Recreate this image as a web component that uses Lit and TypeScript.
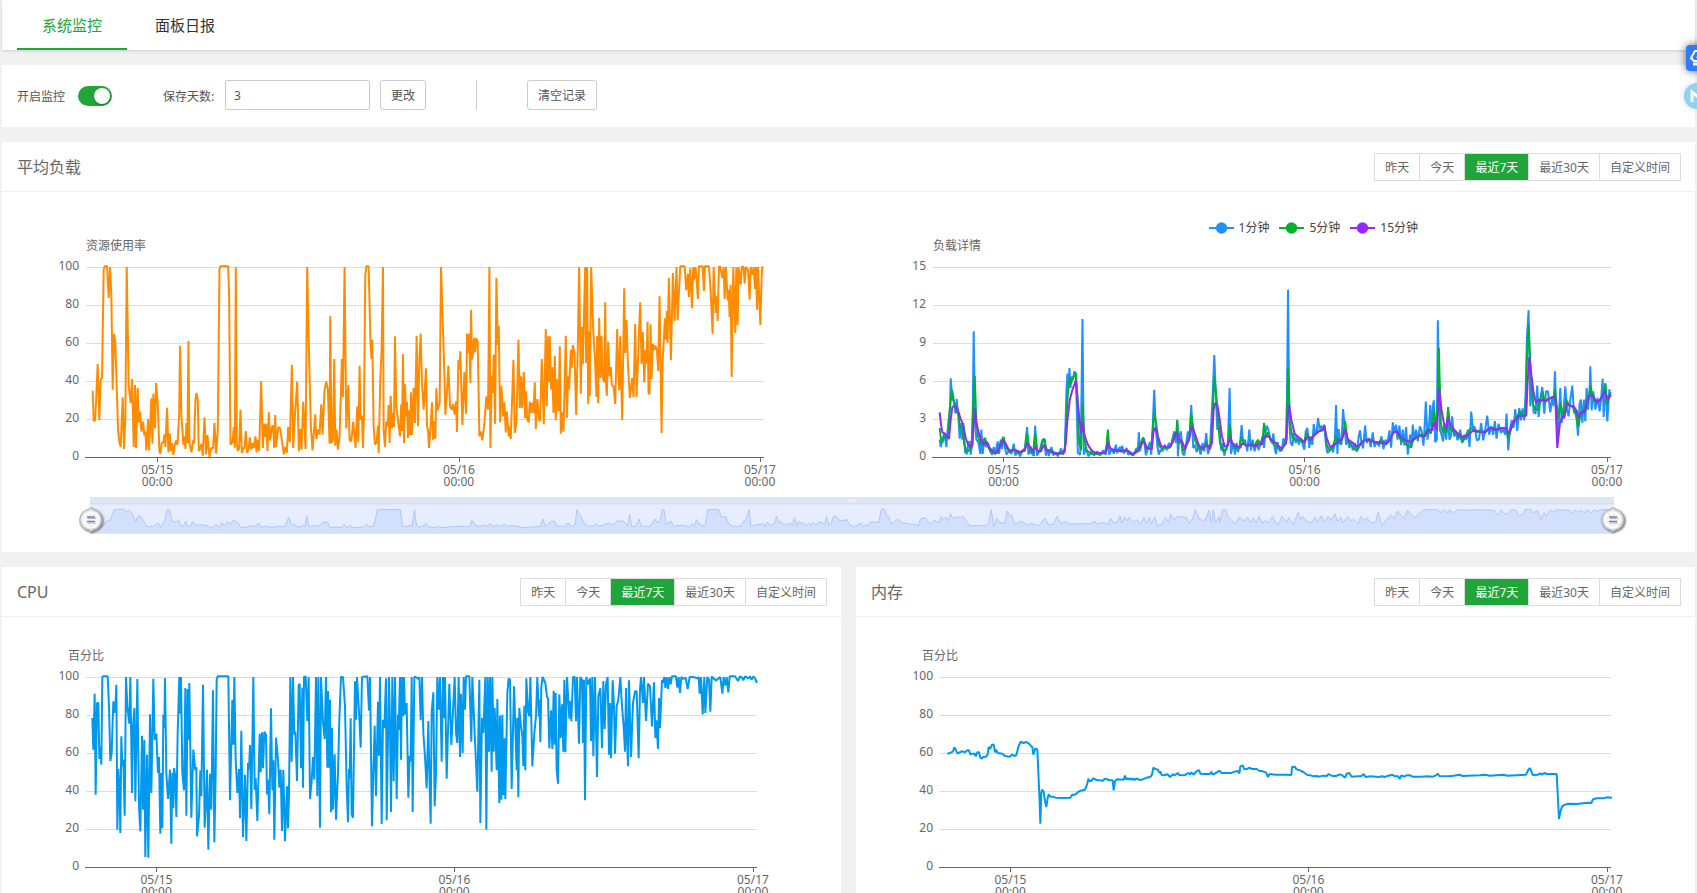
import { LitElement, html, svg, css } from "lit";
import { customElement, property, state } from "lit/decorators.js";

type Segment = [number, number, string];
interface Series {
  name: string;
  color: string;
  points: string;
}
interface Tick {
  at: number;
  day: string;
}

/**
 * Joins recorded segments into one polyline; each segment carries its own origin.
 * Samples that a previous segment already covered are dropped.
 */
function trace(...segments: Segment[]): string {
  const out: string[] = [];
  let last = -Infinity;
  for (const [dx, dy, data] of segments) {
    const n = data.trim().split(/\s+/).map(Number);
    for (let i = 0; i + 1 < n.length; i += 2) {
      const x = n[i] + dx;
      if (x < last) continue;
      last = x;
      out.push(`${x},${n[i + 1] + dy}`);
    }
  }
  return out.join(" ");
}

const usage = trace(
  [-110, -112, `130 483 133 573 137 573 140 520 145 403 150 572 154 450 158 445 163 120 166 110 173 110 178 205 182 112 186 200 190 480 194 312 198 340 206 600 210 636 214 652 220 503 224 658 228 560 232 112 238 470 244 520 248 448 253 652 257 466 260 656 265 474 268 578 272 546 276 606 281 576 285 618 288 606 291 662 296 568 299 662 306 506 309 642 312 492 317 596 320 460 325 520 330 665 333 672 337 640 342 638 345 614 348 652 353 534 357 668 361 612 364 664 368 640 372 676 376 645 381 632 384 646 389 560 392 348 396 560 402 645 405 620 408 658 411 580 414 640 417 334 420 640 426 668 431 632 434 642 438 510 441 490 445 510 448 664 453 655 456 642 460 678 465 564 470 674 474 616 480 682 485 655 491 656 495 580 500 672 505 600 510 120 512 110 536 110 539 200 543 645 549 638 553 592 556 654 559 112 562 640 565 664 569 655 573 540 577 670 581 655 585 655 589 604 593 670 598 655 601 623 605 660 609 640 613 655 618 620 621 668 625 630 629 665 635 454 640 655 643 582 646 622 650 582 654 664 658 548 662 632 668 588 671 590 674 655 677 556 680 652 686 592 692 597 698 640 703 674 707 652 712 670 716 592 721 638 727 405 731 655 736 560 743 456 748 665 752 598 756 660 761 516 768 658 773 112 779 400 784 590 789 662 797 554 800 628 805 600 810 614 815 524 819 615 825 480 830 455 835 480 840 642 842 260 846 640 850 630 854 388 857 648 861 600 865 660 870 620 877 388 880 502 885 112 890 596 896 466 900 632 905 635 911 576 918 655 923 530 926 638 930 408 933 570 937 558 940 656 943 560 947 140 950 110 957 110 963 350 966 388 968 330 972 590 976 644 981 640 985 588 987 670 992 450 996 360 1000 112 1002 600 1006 652 1010 575 1014 590 1017 526 1020 640 1023 498 1027 596 1030 550 1033 592 1036 320 1040 530 1045 570 1051 620 1055 524 1057 604 1060 374 1063 640 1066 464 1069 560 1072 516 1075 625 1079 542 1082 616 1084 488 1087 616 1092 474 1096 580 1101 318`],
  [970, -112, `25 590 29 400 33 312 37 460 42 540 49 416 52 590 55 600 58 655 62 600 67 518 70 630 74 575 77 628 80 476 84 542 90 520 92 300 94 112 100 300 104 430 107 555 111 500 116 408 121 530 126 540 130 523 135 555 139 515 142 607 146 392 149 420 152 365 158 586 164 427 169 552 172 312 175 370 178 312 182 460 184 240 187 390 190 370 193 324 196 368 200 326 204 335 209 620 213 605 218 632 224 580 230 500 235 540 239 112 242 655 246 438 249 490 252 375 256 582 260 145 264 345 267 288 271 578 275 470 280 560 284 518 288 608 291 545 297 620 300 590 303 628 311 390 315 610 320 580 326 330 330 535 334 440 337 535 342 427 346 565 349 485 352 568 357 578 360 516 363 550 367 520 371 550 375 458 378 598 383 508 388 570 391 575 396 388 402 584 408 298 411 530 415 320 418 458 420 320 424 480 427 412 431 550 435 378 438 572 441 448 446 545 450 350 453 612 457 548 461 606 468 318 471 565 475 440 478 480 483 360 486 414 489 346 494 370 499 556 504 350 508 112 513 492 516 292 519 404 526 112 529 400 532 112 535 522 537 305 540 500 544 112 550 300 555 380 560 502 562 318 565 520 568 264 571 445 575 318 578 440 583 458 586 218 589 470 591 498 595 336 599 440 603 412 606 466 611 470 616 523 622 298 625 420 628 482 631 320 637 572 643 176 646 370 650 270 654 400 660 505 667 445 671 503 676 282 680 502 685 378 688 290 691 218 695 402 699 308 703 458 707 360 710 402 713 276 716 490 719 494 722 284 725 448 729 342 733 360 737 348 741 362 745 424 749 200 755 610 758 400 765 266 768 330 771 244 773 340 777 144 783 392 789 130 794 274 800 112 803 272 811 110 824 110 829 182 834 132 837 202 841 115 846 236 850 112 852 150 857 112 864 208 867 110 878 110 882 184 885 110 897 110 902 184 908 312 911 112 914 180 917 250 921 200 923 274 927 110 931 112 937 145 941 112 944 208 948 112 953 212 956 180 959 262 962 165 965 442 970 112 976 310 979 112 983 286 986 112 992 165 996 110 1001 112 1004 162 1008 112 1014 120 1019 210 1022 112 1027 135 1031 112 1035 178 1038 112 1041 240 1044 112 1047 190 1051 286 1055 140 1057 112 1060 112`]
);

const load1 = trace(
  [-70, -172, `90 690 93 712 98 690 104 670 110 712 114 660 118 620 121 600 123 506 128 570 133 575 138 612 141 568 146 620 150 687 154 640 158 690 161 640 166 727 172 733 176 700 180 694 183 735 188 700 192 365 196 640 200 690 206 698 212 733 215 660 219 733 224 685 229 712 235 700 241 725 247 735 252 712 256 735 264 695 268 733 273 690 277 718 281 682 286 715 290 735 298 722 305 733 312 702 317 738 324 722 331 740 338 722 345 720 352 652 356 735 363 712 368 735 373 738 376 648 382 738 390 722 398 690 404 688 408 738 413 718 417 739 425 712 430 737 438 728 444 740 454 716 458 735 465 725 470 540 473 492 476 535 479 475 482 535 486 500 489 510 494 485 498 492 501 600 504 730 511 735 514 640 518 328 522 735 528 715 536 740 545 725 553 737 562 725 570 737 580 722 588 735 594 680 598 735 606 718 612 732 618 705 622 730 630 712 633 728 637 708 642 732 650 715 655 735 664 728 670 738 680 715 684 725 687 668 690 725 696 700 702 685 708 737 714 715 720 697 724 735 729 640 733 540 738 660 743 715 747 735 752 720 758 725 765 705 770 722 777 700 782 712 787 690 793 665 798 700 802 630 804 740 808 680 813 665 818 732 823 737 829 700 834 665 839 680 844 586 850 715 855 705 860 727 867 710 872 735 878 700 883 725 889 670 894 733 900 715 905 620 908 560 913 436 918 560 922 660 928 650 934 722 939 700 943 738 950 712 954 700 959 535 963 733 970 700 975 735 980 700 984 727 990 705 995 646 999 700 1005 690 1012 725 1018 660 1023 722 1028 690 1034 725 1040 695 1046 722 1052 700 1058 680 1062 715 1067 665 1070 648 1075 660 1081 690 1086 700 1090 671 1094 715 1098 733 1103 697`],
  [1010, -172, `24 710 30 725 36 720 40 686 44 705 48 680 51 560 54 240 58 640 62 700 67 708 72 670 77 700 82 680 86 705 92 685 98 705 103 720 107 665 112 655 118 715 122 680 127 706 131 643 135 670 140 665 144 625 149 660 154 648 158 660 163 645 167 700 172 730 178 725 183 712 189 728 194 700 198 586 202 733 206 658 210 700 214 705 219 598 223 640 228 705 234 690 238 715 243 695 248 722 254 700 260 726 266 680 270 662 274 700 279 716 285 648 290 700 296 685 302 712 308 668 313 712 320 695 327 710 334 680 340 718 346 690 352 700 358 662 363 714 368 638 373 668 378 645 382 690 388 648 393 706 398 660 403 708 408 652 413 735 420 675 424 715 428 645 433 690 438 660 443 695 449 650 454 662 460 708 464 640 467 576 472 690 476 660 480 586 484 660 488 590 491 572 495 698 500 690 503 332 509 660 514 675 519 695 523 640 528 690 533 625 538 690 542 680 546 620 551 680 557 670 562 692 570 660 576 700 582 675 588 690 593 660 598 712 603 606 608 655 613 650 620 692 626 690 633 640 639 692 645 660 651 618 657 675 663 650 669 675 674 634 679 687 685 642 692 670 698 660 705 675 709 612 714 722 719 660 725 632 730 655 735 598 741 664 747 595 752 632 757 596 762 632 766 560 770 385 775 302 780 590 785 515 790 608 796 612 801 528 805 622 810 570 816 532 822 612 827 545 833 545 840 608 846 560 850 590 854 485 858 610 863 690 870 535 874 640 880 600 885 530 890 600 895 620 900 570 906 528 911 610 917 600 923 678 928 580 932 570 936 640 941 570 945 635 949 535 953 600 958 540 960 470 964 602 969 545 975 600 982 565 988 605 993 560 997 507 1000 622 1005 520 1011 635 1017 540 1020 545`]
);

const load5 = trace(
  [-70, -172, `90 655 94 690 98 700 104 675 110 685 116 672 120 600 124 565 127 540 133 575 138 605 146 610 150 650 158 655 163 700 170 722 175 725 181 718 186 700 190 600 195 498 200 640 205 680 212 705 220 695 226 685 232 705 240 720 250 730 260 728 268 712 275 695 281 682 288 710 300 728 312 718 325 732 338 725 346 715 352 670 357 705 363 730 370 730 376 670 382 720 390 728 397 700 404 688 410 720 425 722 438 732 455 728 465 722 470 620 475 540 480 505 484 520 490 505 494 498 498 490 503 560 508 700 514 722 518 580 523 680 530 722 545 733 570 733 585 730 590 710 594 660 598 712 610 725 630 722 650 722 665 735 680 725 690 705 700 683 708 715 716 718 724 712 729 660 733 605 740 650 748 710 758 718 768 712 778 715 786 700 794 670 800 672 802 632 806 700 813 695 820 725 830 705 838 690 844 612 849 650 855 690 865 715 875 720 884 712 889 695 895 715 903 700 908 620 913 500 920 570 925 640 930 700 940 725 950 718 956 690 960 645 965 700 975 715 988 712 995 682 1002 702 1012 710 1024 700 1034 708 1044 690 1052 706 1058 690 1062 640 1068 680 1074 668 1082 690 1092 705 1100 712`],
  [1010, -172, `25 715 35 722 42 705 50 690 54 472 60 640 68 685 78 692 90 690 100 700 111 670 120 692 132 675 145 665 158 660 163 648 170 705 178 722 188 712 198 680 205 700 212 700 219 680 225 634 232 690 242 705 252 718 262 722 272 700 285 690 300 690 320 702 335 690 348 705 360 690 370 668 380 668 392 690 405 700 415 710 422 712 432 685 448 678 455 672 460 685 470 660 482 672 492 602 498 660 502 600 506 415 512 640 518 670 523 650 528 670 534 592 540 660 550 665 562 675 578 696 590 672 603 655 618 668 632 665 645 670 655 655 668 655 680 662 695 655 708 655 714 686 722 660 732 632 741 620 750 605 758 620 765 615 770 450 775 345 782 500 787 580 795 600 803 600 810 568 817 545 823 578 832 568 842 565 850 565 854 540 860 590 864 630 870 580 880 620 888 570 895 585 908 592 918 620 924 652 932 605 942 600 950 570 957 555 960 528 966 555 974 575 983 578 992 565 1000 550 1005 523 1010 585 1016 560 1022 548`]
);

const load15 = trace(
  [-70, -172, `90 608 94 645 98 668 106 672 118 688 123 630 128 592 136 588 144 600 152 625 160 645 168 685 175 705 183 714 188 705 195 596 200 640 207 668 214 690 222 705 230 695 240 715 250 725 262 730 270 712 280 692 287 700 296 718 305 725 315 720 330 727 345 723 352 700 360 710 370 725 376 712 384 725 394 725 402 705 410 722 425 727 440 733 462 730 468 700 473 630 480 570 488 540 498 512 502 560 508 620 514 672 518 638 525 680 534 705 545 722 558 730 585 730 590 722 594 698 602 716 615 722 640 725 655 723 668 735 684 725 694 705 702 694 712 715 726 718 731 665 736 655 744 680 754 710 768 712 780 712 790 695 797 672 801 668 806 690 814 690 826 718 836 690 842 668 847 650 854 670 866 705 876 716 890 707 900 717 906 700 911 600 916 580 922 585 928 620 936 680 944 710 952 710 960 684 968 702 982 712 991 714 996 702 1010 707 1024 707 1038 710 1045 702 1055 705 1063 680 1070 682 1075 678 1085 692 1100 702`],
  [1010, -172, `22 706 35 716 48 702 53 620 57 585 64 630 74 672 88 685 103 698 113 682 124 688 135 675 147 665 158 662 163 650 170 685 180 712 195 705 206 690 212 695 220 675 226 660 234 690 246 698 260 711 270 705 285 690 302 692 320 698 348 702 358 692 370 668 380 665 390 680 402 690 412 695 422 695 438 685 450 678 464 680 475 660 486 662 492 636 500 662 507 538 514 600 522 645 528 655 534 622 541 648 552 660 566 675 580 683 592 678 606 665 618 662 634 668 648 665 660 655 676 660 692 656 708 658 715 672 728 640 738 630 748 618 768 618 772 520 777 442 784 500 790 550 797 580 806 570 812 575 818 568 826 575 836 568 846 562 855 562 861 715 869 640 876 620 882 625 890 582 898 588 910 590 920 605 924 625 932 610 944 605 952 572 960 555 970 562 980 578 992 570 1002 545 1008 555 1012 572 1022 555`]
);

const cpu = trace(
  [-258, -352, `277 475 280 570 284 402 287 705 291 430 295 430 298 598 301 560 304 615 307 352 309 350 323 350 327 440 331 604 335 580 340 425 343 460 347 425 349 375 352 810 355 628 358 680 361 820 364 530 367 620 370 600 374 768 378 352 382 440 388 492 391 352 396 700 399 500 403 445 406 725 412 358 417 740 421 815 426 528 429 750 433 540 436 892 441 585 445 894 450 464 454 700 460 357 464 540 469 522 474 640 477 592 481 822 484 640 487 806 490 465 493 505 495 355 499 640 504 718 510 630 514 852 517 640 520 745 522 625 526 650 529 772 533 520 538 352 540 462 543 352 547 640 552 692 556 385 559 768 563 388 566 540 568 370 574 774 580 570 586 632 589 622 591 830 597 770 601 632 604 710 609 375 614 804 617 740 621 630 625 870 630 642 634 750 639 392 643 848 647 640 650 360 653 350 685 350 690 722 697 420 700 555 703 352 707 600 712 700 717 628 720 776 724 513 729 832 735 645 739 844 744 610 747 630 750 556 754 748 760 352 764 690 767 655 772 784 779 522 782 638 786 518 789 626 793 516 798 525 801 704 804 660 808 764 813 446 817 692 820 602 823 840 828 534 834 600 838 684 842 630 846 814 850 630 855 845 861 680 864 806 867 700 871 352 875 606 879 352 883 525 886 516 891 664 896 378 899 372 903 626 907 384 909 684 912 352 917 350 922 485 926 352 930 718 935 665 939 592 943 660 948 352 952 710 955 352 960 804 963 352 969 490 974 538 978 352 982 624 984 394 987 624 990 420 993 758 996 505 999 750 1004 584 1008 780 1014 640 1018 480 1023 352 1029 352 1035 440 1040 680 1044 788 1047 628 1049 655 1052 476 1055 765 1059 774 1065 365 1068 480 1071 352 1078 475 1082 564 1086 352 1102 350 1107 452 1110 352 1116 800 1120 640 1124 498 1128 710 1134 426 1137 588 1140 352 1145 793 1149 480 1153 505 1158 356 1160 782 1167 352 1170 505 1173 757 1177 352 1181 665 1185 352 1190 718 1194 465 1196 510 1200 352 1203 600 1206 352 1209 470 1212 352 1215 465 1220 430 1225 714 1229 588`],
  [972, -352, `2 605 5 352 8 757 13 352 17 352 25 358 28 352 32 482 36 352 40 520 45 590 50 686 55 484 58 640 62 792 65 456 70 398 74 740 78 640 82 352 86 450 90 352 95 606 99 352 102 475 105 352 110 657 118 372 124 556 134 352 138 520 142 550 146 352 150 592 153 402 158 580 161 352 165 450 168 350 178 350 184 546 187 352 193 500 202 696 208 360 211 790 216 474 220 520 226 352 229 810 233 352 237 576 240 352 245 636 247 352 251 576 254 445 260 632 262 418 268 730 270 468 274 720 277 465 280 706 283 536 286 718 292 400 296 356 300 360 305 688 312 380 316 500 320 632 322 474 325 713 328 445 333 500 337 530 340 620 343 438 346 632 349 356 354 455 358 470 361 352 367 620 373 520 378 470 382 352 387 470 388 420 391 548 394 380 398 352 406 370 411 412 414 415 418 566 423 452 427 568 431 393 434 555 437 400 440 630 444 672 448 404 452 535 456 434 460 576 463 360 466 578 471 352 478 476 480 424 484 485 489 352 494 352 498 485 501 352 507 552 511 352 516 360 519 550 522 360 525 722 529 352 534 374 540 356 543 544 547 352 550 590 555 352 561 652 565 410 571 386 576 566 580 364 584 508 588 374 593 352 597 585 600 430 603 596 608 362 612 440 615 582 620 440 625 420 631 352 636 440 641 500 645 576 648 385 650 500 654 620 657 362 663 592 669 430 675 395 680 395 686 596 690 390 693 352 699 430 702 352 708 484 714 372 720 380 726 500 732 368 736 535 739 482 744 568 747 415 750 505 756 360 759 370 763 352 766 385 770 352 774 388 778 352 782 374 786 350 798 350 802 384 806 352 810 400 814 352 820 358 827 354 833 388 839 352 850 352 862 356 866 352 869 402 873 352 878 464 883 352 886 460 892 352 897 360 901 456 905 350 910 356 918 362 926 356 931 352 937 402 941 352 946 378 950 352 955 398 959 350 975 350 984 364 990 350 996 354 1000 362 1005 350 1015 356 1020 350 1025 360 1030 350 1036 358 1041 370`]
);

const memory = trace(
  [-270, -352, `292 582 300 580 309 575 313 563 318 572 323 582 330 577 338 575 345 578 352 572 357 572 361 584 367 582 374 582 377 590 382 578 387 578 391 594 395 597 400 592 408 591 413 584 416 562 421 568 425 556 431 554 435 578 438 570 443 580 457 582 465 589 479 591 486 585 493 589 499 586 505 562 512 546 520 550 529 547 537 552 543 559 547 562 550 585 556 566 562 570 566 660 569 730 571 792 574 700 576 690 581 696 585 725 589 742 593 715 596 704 602 711 610 711 616 714 640 715 661 714 667 705 675 705 684 697 692 693 705 690 711 675 715 657 718 664 724 664 729 656 740 661 758 663 766 657 776 661 788 662 791 692 795 664 801 659 821 660 825 648 829 660 834 656 840 660 843 656 848 661 851 656 855 661 860 656 866 660 876 660 890 654 902 651 906 645 910 624 916 628 924 630 928 640 931 635 935 646 942 647 953 644 960 652 969 644 974 647 983 640 988 646 1004 647 1014 640 1020 644 1024 638 1031 645 1038 636 1047 631 1051 642 1065 643 1080 643 1084 636 1088 645 1098 640 1108 633 1115 640 1143 640 1153 636 1164 634 1168 642 1171 620 1178 617 1183 629 1191 628 1198 624 1206 628 1220 628 1229 634`],
  [960, -352, `5 634 18 638 24 652 29 643 45 645 80 645 94 646 96 622 104 621 110 629 120 632 130 637 142 646 152 647 160 650 170 649 178 651 188 648 200 649 206 643 216 649 228 649 240 644 248 648 255 654 260 642 268 640 275 651 290 650 304 649 311 643 317 652 332 650 355 652 366 650 374 652 385 648 396 645 405 650 414 650 419 658 424 647 432 651 440 647 450 647 458 651 485 651 500 650 518 651 526 648 533 642 538 649 565 650 580 648 600 645 606 649 660 647 675 645 690 648 730 645 742 648 798 645 804 632 809 625 814 634 818 646 834 645 840 641 846 645 853 640 860 643 890 643 893 700 897 778 901 757 906 741 914 735 926 732 950 733 975 730 988 729 994 730 999 719 1010 716 1030 716 1040 713 1056 714`]
);

/* Overview curve shown inside the zoom bar, measured from the top of its track. */
const overview = trace(
  [-120, -800, `120 880 150 880 160 885 170 872 180 870 193 837 222 837 228 847 236 838 248 852 256 875 265 857 275 862 290 888 312 888 323 877 332 890 344 872 351 838 358 838 366 872 378 875 386 868 392 885 400 888 407 872 413 888 420 888 427 874 440 885 450 883 462 885 470 885 480 892 488 892 497 882 508 892 516 877 523 888 532 874 541 882 549 870 564 878 572 892 590 890 604 886 612 890 626 878 633 890 645 888 668 891 684 888 704 888 716 860 723 882 732 882 740 888 750 890 757 884 764 890 770 858 776 888 795 885 807 888 818 875 832 875 838 892 860 890 873 892 882 882 890 892 900 886 908 892 940 890 950 882 958 890 970 888 982 838 1050 838 1057 888 1075 888 1080 884`],
  [960, -800, `5 890 13 838 19 885 25 890 40 886 48 880 56 890 75 892 82 886 88 892 140 888 178 888 185 870 196 885 205 888 220 884 230 888 240 880 250 888 262 884 272 888 282 880 290 888 310 886 340 892 390 888 398 866 405 888 420 875 432 872 440 888 460 888 474 878 484 888 494 884 500 838 510 855 522 880 535 888 548 888 555 880 565 888 585 882 596 878 606 884 620 872 640 872 652 888 658 852 664 888 675 888 686 866 692 886 705 888 720 888 734 866 740 876 750 872 755 838 761 838 767 882 782 872 790 888 818 884 838 890 845 880 852 888 858 868 866 882 884 888 892 838 925 838 934 862 946 858 955 882 968 888 990 888 1002 870 1008 866 1016 838 1022 888 1045 882 1060 882 1064 888 1070 876 1080 884 1092 880 1098 858 1106 875`],
  [2040, -20, `30 95 45 105 58 98 66 106 72 82 80 108 86 92 93 100 100 98 106 107 115 98 121 107 127 95 135 104 150 94 163 103 168 78 175 103 182 100 188 80 196 77 208 92 230 88 236 103 252 109 262 104 272 98 278 109 286 103 293 107 299 94 325 97 332 58 342 57 350 78 355 78 361 100 370 96 382 86 396 98 416 100`],
  [2460, -860, `0 942 18 942 22 948 30 926 44 922 50 930 58 942 72 930 84 938 92 918 98 928 106 920 112 932 120 910 127 925 140 920 160 920 176 946 225 946 234 940 242 898 250 950 258 924 266 936 282 940 290 902 298 918 303 914 313 942 332 932 350 944 364 938 374 944 388 944 398 928 404 924 412 942 425 944 440 918 450 940 465 934 480 942 498 940 520 940 538 940 552 932 558 942 575 936 592 942 600 924 608 938 620 936 628 916 634 938 642 920 648 932 656 920 665 936 680 928 690 942 700 920 706 940 716 922 722 942 732 920 740 946 754 942 764 920 774 936 780 910 790 928 800 918 828 922 835 940 845 926 854 898 866 928 878 930 884 928 895 900 902 938 908 898 914 938 925 918 928 936 936 898 945 898 950 918 965 932 975 940 985 920 1000 932 1010 920 1022 938 1028 922 1036 938 1045 918 1055 938 1064 930 1072 938`],
  [3540, -860, `5 918 12 932 22 944 34 918 48 936 54 922 68 942 82 906 90 928 95 918 105 930 120 938 134 920 140 936 152 916 160 936 172 918 180 930 192 910 200 934 210 920 216 938 230 918 238 930 250 928 262 940 270 918 278 930 288 922 300 938 314 936 322 906 330 936 335 946 344 930 360 914 370 924 380 902 400 924 410 900 425 918 432 922 445 908 460 898 500 898 510 906 520 898 530 908 536 898 548 908 560 898 600 900 620 898 670 900 680 915 690 898 700 908 710 912 720 898 735 900 745 918 756 910 762 898 780 898 786 908 800 900 810 928 820 906 826 918 838 898 848 906 854 898 895 900 903 910 910 898 920 906 930 898 940 908 948 898 960 908 970 898 980 904 990 898 1000 898 1029 900`]
);

const percentScale = ["100", "80", "60", "40", "20", "0"];
const days = (a: number, b: number, c: number): Tick[] => [
  { at: a, day: "05/15" },
  { at: b, day: "05/16" },
  { at: c, day: "05/17" },
];

const usageSeries: Series[] = [{ name: "资源使用率", color: "#ff8c00", points: usage }];
const loadSeries: Series[] = [
  { name: "1分钟", color: "#1e90ff", points: load1 },
  { name: "5分钟", color: "#00b22d", points: load5 },
  { name: "15分钟", color: "#9328ff", points: load15 },
];
const cpuSeries: Series[] = [{ name: "CPU", color: "#0099ee", points: cpu }];
const memorySeries: Series[] = [{ name: "内存", color: "#0099ee", points: memory }];

@customElement("line-chart")
class LineChart extends LitElement {
  @property() name = "";
  @property({ type: Boolean, attribute: "name-centered" }) nameCentered = false;
  @property({ type: Number }) span = 2032;
  @property({ attribute: false }) scale: string[] = percentScale;
  @property({ attribute: false }) ticks: Tick[] = [];
  @property({ attribute: false }) series: Series[] = [];

  static styles = css`
    :host {
      display: grid;
      grid-template-columns: 40px minmax(0, 1fr);
      grid-template-rows: 16px 191px auto;
      font-size: 12px;
      line-height: 12px;
      color: #666;
    }
    .name {
      grid-column: 2;
      justify-self: start;
      padding-top: 1px;
      line-height: 16px;
      white-space: nowrap;
    }
    .name.centered {
      transform: translateX(-50%);
    }
    .scale {
      grid-column: 1;
      grid-row: 2;
      display: flex;
      flex-direction: column;
      justify-content: space-between;
      height: 202px;
      margin: 7px 7px -7px 0;
      text-align: right;
    }
    .plot {
      grid-column: 2;
      grid-row: 2;
      display: grid;
      margin: 14px 0 -14px;
    }
    .lines,
    .curves {
      grid-area: 1 / 1;
    }
    .lines {
      display: flex;
      flex-direction: column;
      justify-content: space-between;
      height: 191px;
    }
    .line {
      height: 1px;
      background: #dcdcdc;
    }
    .line:last-child {
      margin-left: -1px;
      background: #666;
    }
    .curves {
      width: 100%;
      height: 190px;
      overflow: visible;
    }
    .days {
      grid-column: 2;
      grid-row: 3;
      position: relative;
      height: 30px;
      margin-top: 14px;
    }
    .day {
      position: absolute;
      top: 0;
      padding-top: 6px;
      transform: translateX(-50%);
      text-align: center;
    }
    .day::before {
      content: "";
      position: absolute;
      top: 0;
      left: 50%;
      width: 1px;
      height: 4px;
      background: #666;
    }
    .day span {
      display: block;
    }
  `;

  render() {
    return html`
      <div class="name ${this.nameCentered ? "centered" : ""}">${this.name}</div>
      <div class="scale">${this.scale.map((s) => html`<span>${s}</span>`)}</div>
      <div class="plot">
        <div class="lines">${this.scale.map(() => html`<div class="line"></div>`)}</div>
        <svg class="curves" viewBox="0 0 ${this.span} 570" preserveAspectRatio="none" aria-hidden="true">
          ${this.series.map(
            (s) => svg`<polyline points=${s.points} fill="none" stroke=${s.color} stroke-width="2"
              stroke-linejoin="bevel" vector-effect="non-scaling-stroke"></polyline>`
          )}
        </svg>
      </div>
      <div class="days">
        ${this.ticks.map(
          (t) => html`<div class="day" style="left:${t.at}%"><span>${t.day}</span><span>00:00</span></div>`
        )}
      </div>
    `;
  }
}

@customElement("range-picker")
class RangePicker extends LitElement {
  @state() private active = 2;
  private options = ["昨天", "今天", "最近7天", "最近30天", "自定义时间"];

  static styles = css`
    :host {
      display: flex;
    }
    .option {
      box-sizing: border-box;
      height: 28px;
      margin: 0;
      padding: 2px 10px 0;
      border: 1px solid #dcdcdc;
      border-right-width: 0;
      background: #fff;
      color: #666;
      font: inherit;
      font-size: 12px;
      line-height: 24px;
      white-space: nowrap;
      cursor: pointer;
    }
    .option:last-child {
      border-right-width: 1px;
    }
    .option.active {
      background: #20a53a;
      background-clip: padding-box;
      color: #fff;
    }
  `;

  render() {
    return this.options.map(
      (label, i) => html`<button
        type="button"
        class="option ${i === this.active ? "active" : ""}"
        aria-pressed=${i === this.active}
        @click=${() => (this.active = i)}
      >${label}</button>`
    );
  }
}

@customElement("zoom-bar")
class ZoomBar extends LitElement {
  static styles = css`
    :host {
      display: grid;
      height: 37px;
    }
    .track,
    .handle {
      grid-area: 1 / 1;
    }
    .track {
      width: 100%;
      height: 37px;
      background: #e6edfe;
    }
    .handle {
      appearance: none;
      align-self: center;
      height: 28px;
      margin: 8px -13px 0;
      background: none;
      pointer-events: none;
    }
    .handle::-webkit-slider-thumb {
      appearance: none;
      width: 28px;
      height: 28px;
      border: 0;
      pointer-events: auto;
      background: url("data:image/svg+xml,%3Csvg xmlns='http://www.w3.org/2000/svg' width='28' height='28'%3E%3Cdefs%3E%3ClinearGradient id='g' x2='1' y2='1'%3E%3Cstop stop-color='%23eee'/%3E%3Cstop offset='1' stop-color='%23c4c4c4'/%3E%3C/linearGradient%3E%3Cfilter id='s' x='-.3' y='-.3' width='1.6' height='1.6'%3E%3CfeDropShadow dx='1' dy='1' stdDeviation='1' flood-color='%23444' flood-opacity='.8'/%3E%3C/filter%3E%3C/defs%3E%3Cpath d='M14 1.5l2 1.8a10.7 10.7 0 0 1 0 21.2l-2 1.8-2-1.8a10.7 10.7 0 0 1 0-21.2z' fill='url(%23g)' stroke='%2399a' stroke-width='.8' filter='url(%23s)'/%3E%3Ccircle cx='14' cy='14' r='8' fill='%23f4f4f4' stroke='%23fff' stroke-width='1.5'/%3E%3Cpath d='M10 11h8M10 15.5h8' stroke='%237083ad' stroke-width='1.4'/%3E%3Cpath d='M11 12.5h8M11 17h8' stroke='%23b3b8c6' stroke-width='1.2'/%3E%3C/svg%3E") center / 28px 28px no-repeat;
    }
  `;

  render() {
    return html`
      <svg class="track" viewBox="0 0 4569 111" preserveAspectRatio="none" aria-hidden="true">
        <polygon points="0,102 ${overview} 4569,102" fill="#d3e0fd"></polygon>
        <rect y="99" width="4569" height="9" fill="#d3e0fd"></rect>
        <polyline points=${overview} fill="none" stroke="#afc7f8" stroke-width="1" vector-effect="non-scaling-stroke"></polyline>
        <rect width="4569" height="19" fill="#dde5f1"></rect>
        <rect y="19" width="4569" height="3" fill="#d0dbed"></rect>
        <rect y="108" width="4569" height="3" fill="#dde5f1"></rect>
        <path d="M2276 6v9M2284 6v9M2292 6v9" stroke="#fff" stroke-width="1" vector-effect="non-scaling-stroke"></path>
      </svg>
      <input class="handle" type="range" min="0" max="100" value="0" aria-label="起始时间" />
      <input class="handle" type="range" min="0" max="100" value="100" aria-label="结束时间" />
    `;
  }
}

@customElement("app-root")
class AppRoot extends LitElement {
  @state() private tab = 0;

  static styles = css`
    :host {
      display: block;
      box-sizing: border-box;
      height: 100vh;
      padding: 0 2px;
      overflow: hidden auto;
      scrollbar-width: none;
      background: #f1f1f1;
      color: #555;
      font-family: "Noto Sans", "Noto Sans CJK SC", sans-serif;
      font-size: 12px;
    }
    .panel {
      background: #fff;
      margin-bottom: 15px;
    }
    .tabs {
      display: flex;
      gap: 3px;
      height: 50px;
      padding: 0 15px;
      box-shadow: 0 1px 3px rgba(0, 0, 0, 0.15);
    }
    .tab {
      padding: 0 25px;
      border: 0;
      border-bottom: 2px solid transparent;
      background: none;
      color: #333;
      font: inherit;
      font-size: 15px;
      cursor: pointer;
    }
    .tab.active {
      color: #20a53a;
      border-bottom-color: #20a53a;
    }
    .settings {
      display: flex;
      align-items: center;
      padding: 15px 15px 17px;
    }
    .toggle {
      appearance: none;
      display: flex;
      align-items: center;
      box-sizing: border-box;
      width: 34px;
      height: 20px;
      margin: 2px 51px 0 13px;
      padding: 2px;
      border-radius: 10px;
      background: #ccc;
      cursor: pointer;
    }
    .toggle::before {
      content: "";
      width: 16px;
      height: 16px;
      border-radius: 50%;
      background: #fbfbfb;
      box-shadow: 0 1px 2px rgba(0, 0, 0, 0.3);
    }
    .toggle:checked {
      justify-content: flex-end;
      background: #20a53a;
    }
    .label {
      padding-top: 4px;
      line-height: 16px;
    }
    .keep {
      width: 62px;
    }
    .field {
      box-sizing: border-box;
      width: 145px;
      height: 30px;
      margin-right: 10px;
      padding: 0 8px;
      border: 1px solid #ccc;
      border-radius: 2px;
      color: #555;
      font: inherit;
    }
    .button {
      box-sizing: border-box;
      height: 30px;
      padding: 0 10px;
      border: 1px solid #ccc;
      border-radius: 3px;
      background: #fff;
      color: #555;
      font: inherit;
      cursor: pointer;
    }
    .divider {
      width: 1px;
      height: 30px;
      margin: 0 50px;
      background: #ccc;
    }
    .head {
      display: flex;
      align-items: center;
      justify-content: space-between;
      box-sizing: border-box;
      height: 50px;
      padding: 0 14px 0 15px;
      border-bottom: 1px solid #eee;
    }
    .title {
      margin: 0;
      color: #666;
      font-size: 16px;
      font-weight: normal;
      line-height: 24px;
    }
    .legend {
      display: flex;
      justify-content: flex-end;
      gap: 10px;
      margin: 0;
      padding: 28px 277px 1px 0;
      list-style: none;
      color: #444;
    }
    .entry {
      display: flex;
      align-items: center;
      gap: 5px;
      line-height: 16px;
    }
    .pair {
      display: grid;
      grid-template-columns: repeat(2, minmax(0, 1fr));
      gap: 129px;
      padding: 0 84px 0 44px;
    }
    .zoom {
      padding: 9px 81px 18px 88px;
    }
    .columns {
      display: grid;
      grid-template-columns: repeat(2, minmax(0, 1fr));
      gap: 15px;
    }
    .single {
      padding: 30px 84px 30px 44px;
    }
    .floating {
      position: fixed;
      overflow: hidden;
      width: 26px;
      height: 26px;
      padding: 0;
      border: 0;
      cursor: pointer;
    }
    .assistant {
      top: 45px;
      right: -15px;
      border-radius: 4px;
      background: #2d7cff;
      box-shadow: 0 0 8px rgba(0, 0, 0, 0.6);
    }
    .notes {
      top: 83px;
      right: -13px;
      border-radius: 50%;
      background: #8fd3f0;
      box-shadow: 0 0 6px rgba(0, 0, 0, 0.15);
    }
    .glyph {
      display: block;
    }
  `;

  render() {
    return html`
      <nav class="panel tabs">
        ${["系统监控", "面板日报"].map(
          (label, i) => html`<button
            type="button"
            class="tab ${i === this.tab ? "active" : ""}"
            @click=${() => (this.tab = i)}
          >${label}</button>`
        )}
      </nav>

      <section class="panel settings">
        <label class="label" for="monitor">开启监控</label>
        <input class="toggle" id="monitor" type="checkbox" role="switch" checked />
        <label class="label keep" for="keep-days">保存天数:</label>
        <input class="field" id="keep-days" type="text" value="3" />
        <button class="button" type="button">更改</button>
        <span class="divider"></span>
        <button class="button" type="button">清空记录</button>
      </section>

      <section class="panel">
        <header class="head">
          <h2 class="title">平均负载</h2>
          <range-picker></range-picker>
        </header>
        <ul class="legend">
          ${loadSeries.map(
            (s) => html`<li class="entry">
              <svg width="25" height="12" viewBox="0 0 25 12" aria-hidden="true">
                <rect y="5" width="25" height="2" fill=${s.color}></rect>
                <circle cx="12.5" cy="6" r="5.7" fill=${s.color}></circle>
              </svg>
              ${s.name}
            </li>`
          )}
        </ul>
        <div class="pair">
          <line-chart name="资源使用率" .series=${usageSeries} .ticks=${days(10.5, 55, 99.4)}></line-chart>
          <line-chart
            name="负载详情"
            .scale=${["15", "12", "9", "6", "3", "0"]}
            .series=${loadSeries}
            .ticks=${days(10.4, 54.8, 99.4)}
          ></line-chart>
        </div>
        <zoom-bar class="zoom"></zoom-bar>
      </section>

      <div class="columns">
        <section class="panel">
          <header class="head">
            <h2 class="title">CPU</h2>
            <range-picker></range-picker>
          </header>
          <line-chart
            class="single"
            name="百分比"
            name-centered
            span="2013"
            .series=${cpuSeries}
            .ticks=${days(10.5, 54.9, 99.4)}
          ></line-chart>
        </section>
        <section class="panel">
          <header class="head">
            <h2 class="title">内存</h2>
            <range-picker></range-picker>
          </header>
          <line-chart
            class="single"
            name="百分比"
            name-centered
            span="2013"
            .series=${memorySeries}
            .ticks=${days(10.5, 54.9, 99.4)}
          ></line-chart>
        </section>
      </div>

      <button class="floating assistant" type="button" aria-label="助手">
        <svg class="glyph" width="26" height="26" viewBox="0 0 26 26" aria-hidden="true">
          <path d="M18 6H9L5 13l3 3h10M11 13l2-3h5" fill="none" stroke="#fff" stroke-width="2"></path>
          <path d="M7 19h12" stroke="#fff" stroke-width="3"></path>
        </svg>
      </button>
      <button class="floating notes" type="button" aria-label="笔记">
        <svg class="glyph" width="26" height="26" viewBox="0 0 26 26" aria-hidden="true">
          <path d="M8 19V9l10 8V7" fill="none" stroke="#fff" stroke-width="3"></path>
        </svg>
      </button>
    `;
  }
}
